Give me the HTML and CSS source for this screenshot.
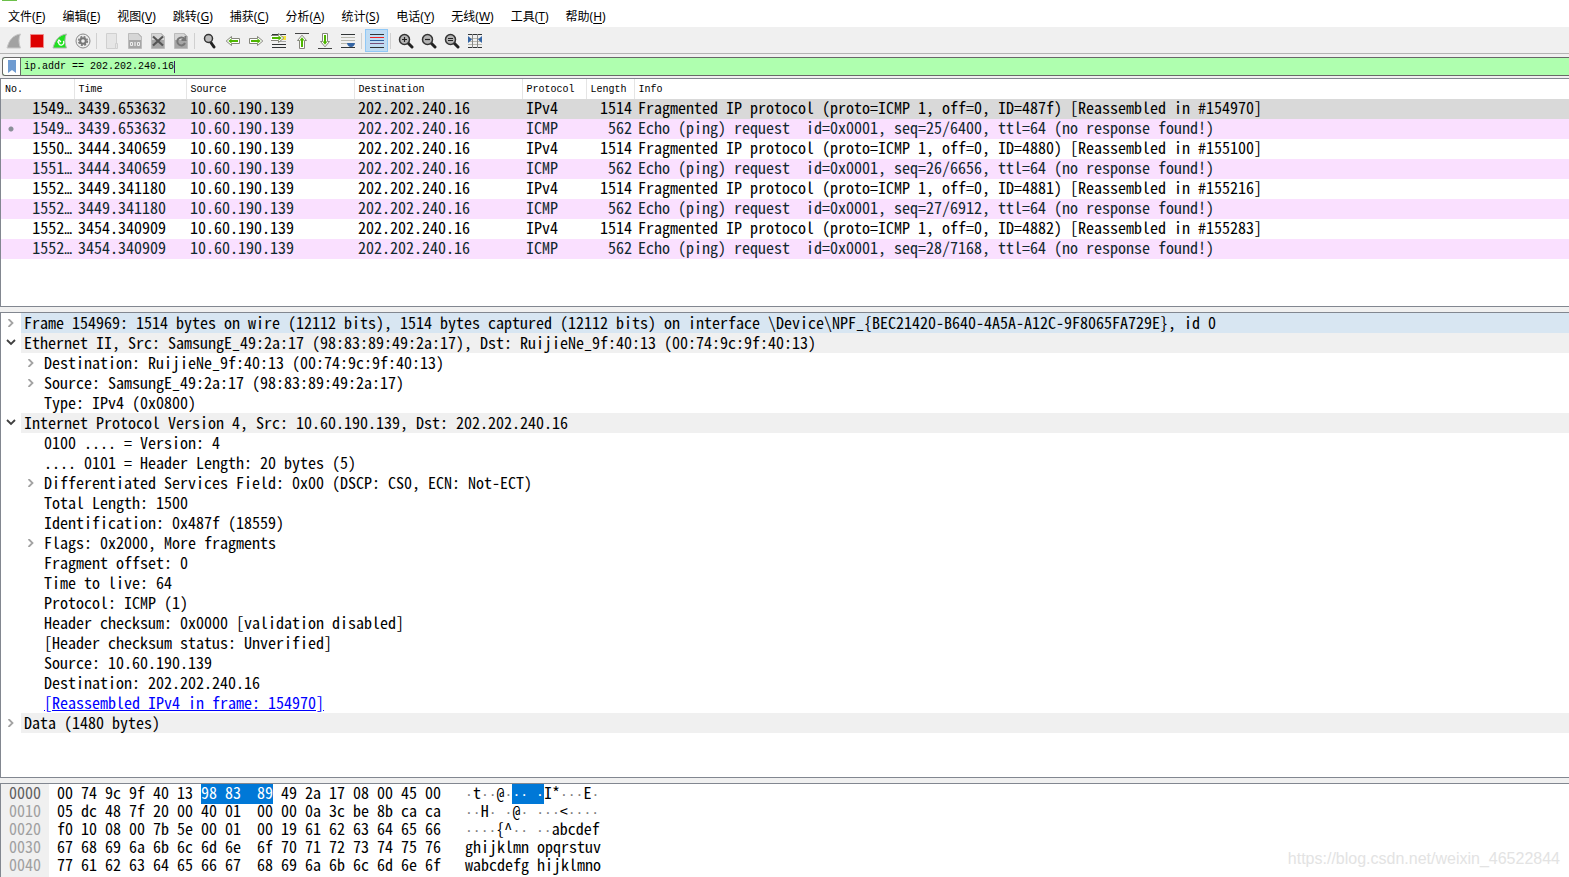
FILE: index.html
```
<!DOCTYPE html>
<html lang="zh-CN">
<head>
<meta charset="utf-8">
<title>Wireshark</title>
<link rel="stylesheet" href="styles.css">
</head>
<body>
<svg class="defs" width="0" height="0" aria-hidden="true">
  <symbol id="doc" viewBox="0 0 16 16"><path d="M1.500 .5h10l3 3v12h-13z" fill="#a6a6a6" stroke="#bcbcbc"/><path d="M2 1h9l3 3v3H2z" fill="#d6d6d6"/></symbol>
  <symbol id="lens" viewBox="0 0 16 16"><path d="M10 10l4 4" stroke="#222" stroke-width="3" stroke-linecap="round"/><circle cx="6.500" cy="6.500" r="5" fill="#b4b4b4" stroke="#333" stroke-width="1.500"/></symbol>
  <symbol id="arrow" viewBox="0 0 16 16"><path d="M1.200 8l5.300-4.500v2h8v5h-8v2z" fill="#fff" stroke="#85857c"/><path d="M3.300 8l3.200-2.500v1.500h6.500v2H6.500v1.500z" fill="#4eb500"/></symbol>
  <symbol id="more" viewBox="0 0 8 8"><path d="M1.500 0L5.500 4 1.500 8" fill="none" stroke="#a3a3a3" stroke-width="1.800"/></symbol>
  <symbol id="less" viewBox="0 0 10 8"><path d="M1 1L5 5 9 1" fill="none" stroke="#404040" stroke-width="1.800"/></symbol>
</svg>
<span class="app-icon"></span>
<nav class="menu">
  <button>文件(<u>F</u>)</button><button>编辑(<u>E</u>)</button><button>视图(<u>V</u>)</button><button>跳转(<u>G</u>)</button><button>捕获(<u>C</u>)</button><button>分析(<u>A</u>)</button><button>统计(<u>S</u>)</button><button>电话(<u>Y</u>)</button><button>无线(<u>W</u>)</button><button>工具(<u>T</u>)</button><button>帮助(<u>H</u>)</button>
</nav>
<div class="toolbar">
  <button aria-label="Start"><svg viewBox="0 0 16 16"><path d="M1 15C3 7 7 2 14.500 1c-2 4-2 9 0 14z" fill="#a2a2a2" stroke="#c8c8c8"/></svg></button>
  <button aria-label="Stop"><svg viewBox="0 0 16 16"><path d="M1.500 1.500h13v13h-13z" fill="#d00" stroke="#e88"/></svg></button>
  <button aria-label="Restart"><svg viewBox="0 0 16 16"><path d="M1 15C3 7 7 2 14.500 1c-2 4-2 9 0 14z" fill="#1fe01f" stroke="#b0b8b0"/><path d="M6.800 8.500a2.600 2.600 0 1 0 4.500-.5M5.500 9.500l1.500-2.500 2 2" fill="none" stroke="#fff" stroke-width="1.300"/></svg></button>
  <button aria-label="Options"><svg viewBox="0 0 16 16"><circle cx="8" cy="8" r="7" fill="#eee" stroke="#8a8a8a"/><circle cx="8" cy="8" r="3.800" fill="#777"/><circle cx="8" cy="8" r="4.300" fill="none" stroke="#777" stroke-width="1.500" stroke-dasharray="2 1.400"/><circle cx="8" cy="8" r="1.800" fill="#eee"/></svg></button>
  <i></i>
  <button aria-label="Open"><svg viewBox="0 0 16 16"><path d="M2.500 .5h10v15h-10z" fill="#e6e6e6" stroke="#d0d0d0"/><path d="M11.500 10.500h2v5h-2z" fill="#e6e6e6" stroke="#d0d0d0"/></svg></button>
  <button aria-label="Save"><svg viewBox="0 0 16 16"><use href="#doc"/><path d="M3.500 9.500h2v3h-2zM10.500 9.500h2v3h-2z" fill="none" stroke="#eee"/><path d="M8 9v4" stroke="#eee" stroke-width="1.200"/></svg></button>
  <button aria-label="Close"><svg viewBox="0 0 16 16"><use href="#doc"/><path d="M3 3.500l10 9M13 3.500l-10 9" stroke="#555" stroke-width="2.200"/></svg></button>
  <button aria-label="Reload"><svg viewBox="0 0 16 16"><use href="#doc"/><path d="M11.500 6A4 4 0 1 0 12 10M12.500 3V7h-4" fill="none" stroke="#777" stroke-width="2"/></svg></button>
  <i></i>
  <button aria-label="Find"><svg viewBox="0 0 16 16"><path d="M8.500 9l3.500 5" stroke="#222" stroke-width="3" stroke-linecap="round"/><circle cx="6.500" cy="5.500" r="4" fill="#bbb" stroke="#333" stroke-width="1.500"/></svg></button>
  <button aria-label="Back"><svg viewBox="0 0 16 16"><use href="#arrow"/></svg></button>
  <button aria-label="Forward"><svg viewBox="0 0 16 16"><use href="#arrow" transform="rotate(180 8 8)"/></svg></button>
  <button aria-label="Go to packet"><svg viewBox="0 0 16 16"><path d="M1 1.500h14M1 11.500h14M1 14.500h14" stroke="#303436"/><path d="M9 3h6v4H9z" fill="#f5e33c"/><path d="M8 8.500h7" stroke="#aaa"/><use href="#arrow" transform="rotate(180 7 7) translate(0 1)"/></svg></button>
  <button aria-label="First packet"><svg viewBox="0 0 16 16"><path d="M1 .5h14" stroke="#444"/><use href="#arrow" transform="translate(0 1) rotate(90 8 8)"/></svg></button>
  <button aria-label="Last packet"><svg viewBox="0 0 16 16"><path d="M1 15.500h14" stroke="#444"/><use href="#arrow" transform="translate(0 -1) rotate(-90 8 8)"/></svg></button>
  <button aria-label="Auto scroll"><svg viewBox="0 0 16 16"><path d="M1 1.500h14M1 14.500h14" stroke="#303436"/><path d="M1 4.500h14M1 7.500h14M1 10.500h7" stroke="#b8b8ae"/><path d="M7 10h8c0 2-2 4-4 4s-4-2-4-4z" fill="#3465a4"/></svg></button>
  <i></i>
  <button class="on" aria-label="Colorize"><svg viewBox="0 0 16 16"><path d="M1 1.500h14M1 14.500h14" stroke="#303436"/><path d="M1 4.500h14" stroke="#e22"/><path d="M1 7.500h14" stroke="#2f62a0"/><path d="M1 10.500h14" stroke="#75507b"/></svg></button>
  <i></i>
  <button aria-label="Zoom in"><svg viewBox="0 0 16 16"><use href="#lens"/><path d="M4 6.500h5M6.500 4v5" stroke="#222" stroke-width="1.200"/></svg></button>
  <button aria-label="Zoom out"><svg viewBox="0 0 16 16"><use href="#lens"/><path d="M4 6.500h5" stroke="#222" stroke-width="1.200"/></svg></button>
  <button aria-label="Normal size"><svg viewBox="0 0 16 16"><use href="#lens"/><path d="M4 5.500h5M4 7.500h5" stroke="#222"/></svg></button>
  <button aria-label="Resize columns"><svg viewBox="0 0 16 16"><path d="M1 1.500h14M1 14.500h14" stroke="#303436"/><path d="M1 5.500h14M1 8.500h14M1 11.500h14" stroke="#b8b8ae"/><path d="M5.500 1v14M10.500 1v14" stroke="#888"/><path d="M1 3l4 3.500-4 3.500zM15 3l-4 3.500 4 3.500z" fill="#3465a4"/></svg></button>
</div>
<div class="filter">
  <button aria-label="Bookmark"><svg viewBox="0 0 8 13"><path d="M0 0h8v13L4 10l-4 3z" fill="#6f9bd1"/></svg></button>
  <input aria-label="Display filter" value="ip.addr == 202.202.240.16" size="25"><span class="caret"></span>
</div>
<main>
<section class="pane list">
<table>
  <colgroup><col class="c-no"><col class="c-time"><col class="c-addr"><col class="c-addr"><col class="c-proto"><col class="c-len"><col></colgroup>
  <thead><tr><th>No.</th><th>Time</th><th>Source</th><th>Destination</th><th>Protocol</th><th>Length</th><th>Info</th></tr></thead>
  <tbody>
  <tr class="sel"><td>1549<span>…</span></td><td>3439.653632</td><td>10.60.190.139</td><td>202.202.240.16</td><td>IPv4</td><td>1514</td><td>Fragmented IP protocol (proto=ICMP 1, off=0, ID=487f) [Reassembled in #154970]</td></tr>
  <tr class="icmp dot"><td>1549<span>…</span></td><td>3439.653632</td><td>10.60.190.139</td><td>202.202.240.16</td><td>ICMP</td><td>562</td><td>Echo (ping) request  id=0x0001, seq=25/6400, ttl=64 (no response found!)</td></tr>
  <tr><td>1550<span>…</span></td><td>3444.340659</td><td>10.60.190.139</td><td>202.202.240.16</td><td>IPv4</td><td>1514</td><td>Fragmented IP protocol (proto=ICMP 1, off=0, ID=4880) [Reassembled in #155100]</td></tr>
  <tr class="icmp"><td>1551<span>…</span></td><td>3444.340659</td><td>10.60.190.139</td><td>202.202.240.16</td><td>ICMP</td><td>562</td><td>Echo (ping) request  id=0x0001, seq=26/6656, ttl=64 (no response found!)</td></tr>
  <tr><td>1552<span>…</span></td><td>3449.341180</td><td>10.60.190.139</td><td>202.202.240.16</td><td>IPv4</td><td>1514</td><td>Fragmented IP protocol (proto=ICMP 1, off=0, ID=4881) [Reassembled in #155216]</td></tr>
  <tr class="icmp"><td>1552<span>…</span></td><td>3449.341180</td><td>10.60.190.139</td><td>202.202.240.16</td><td>ICMP</td><td>562</td><td>Echo (ping) request  id=0x0001, seq=27/6912, ttl=64 (no response found!)</td></tr>
  <tr><td>1552<span>…</span></td><td>3454.340909</td><td>10.60.190.139</td><td>202.202.240.16</td><td>IPv4</td><td>1514</td><td>Fragmented IP protocol (proto=ICMP 1, off=0, ID=4882) [Reassembled in #155283]</td></tr>
  <tr class="icmp"><td>1552<span>…</span></td><td>3454.340909</td><td>10.60.190.139</td><td>202.202.240.16</td><td>ICMP</td><td>562</td><td>Echo (ping) request  id=0x0001, seq=28/7168, ttl=64 (no response found!)</td></tr>
  </tbody>
</table>
</section>
<section class="pane details">
<ul class="tree">
  <li><div class="row top current"><button aria-label="Expand"><svg class="more"><use href="#more"/></svg></button><span>Frame 154969: 1514 bytes on wire (12112 bits), 1514 bytes captured (12112 bits) on interface \Device\NPF_{BEC21420-B640-4A5A-A12C-9F8065FA729E}, id 0</span></div></li>
  <li><div class="row top"><button aria-label="Collapse"><svg class="less"><use href="#less"/></svg></button><span>Ethernet II, Src: SamsungE_49:2a:17 (98:83:89:49:2a:17), Dst: RuijieNe_9f:40:13 (00:74:9c:9f:40:13)</span></div>
    <ul>
      <li class="row"><button aria-label="Expand"><svg class="more"><use href="#more"/></svg></button><span>Destination: RuijieNe_9f:40:13 (00:74:9c:9f:40:13)</span></li>
      <li class="row"><button aria-label="Expand"><svg class="more"><use href="#more"/></svg></button><span>Source: SamsungE_49:2a:17 (98:83:89:49:2a:17)</span></li>
      <li class="row leaf"><span>Type: IPv4 (0x0800)</span></li>
    </ul></li>
  <li><div class="row top"><button aria-label="Collapse"><svg class="less"><use href="#less"/></svg></button><span>Internet Protocol Version 4, Src: 10.60.190.139, Dst: 202.202.240.16</span></div>
    <ul>
      <li class="row leaf"><span>0100 .... = Version: 4</span></li>
      <li class="row leaf"><span>.... 0101 = Header Length: 20 bytes (5)</span></li>
      <li class="row"><button aria-label="Expand"><svg class="more"><use href="#more"/></svg></button><span>Differentiated Services Field: 0x00 (DSCP: CS0, ECN: Not-ECT)</span></li>
      <li class="row leaf"><span>Total Length: 1500</span></li>
      <li class="row leaf"><span>Identification: 0x487f (18559)</span></li>
      <li class="row"><button aria-label="Expand"><svg class="more"><use href="#more"/></svg></button><span>Flags: 0x2000, More fragments</span></li>
      <li class="row leaf"><span>Fragment offset: 0</span></li>
      <li class="row leaf"><span>Time to live: 64</span></li>
      <li class="row leaf"><span>Protocol: ICMP (1)</span></li>
      <li class="row leaf"><span>Header checksum: 0x0000 [validation disabled]</span></li>
      <li class="row leaf"><span>[Header checksum status: Unverified]</span></li>
      <li class="row leaf"><span>Source: 10.60.190.139</span></li>
      <li class="row leaf"><span>Destination: 202.202.240.16</span></li>
      <li class="row leaf"><span><a href="#frame">[Reassembled IPv4 in frame: 154970]</a></span></li>
    </ul></li>
  <li><div class="row top"><button aria-label="Expand"><svg class="more"><use href="#more"/></svg></button><span>Data (1480 bytes)</span></div></li>
</ul>
</section>
<section class="pane bytes">
<pre class="offsets"><b>0000</b>
0010
0020
0030
0040</pre>
<pre class="hex">00 74 9c 9f 40 13 <mark>98 83  89</mark> 49 2a 17 08 00 45 00
05 dc 48 7f 20 00 40 01  00 00 0a 3c be 8b ca ca
f0 10 08 00 7b 5e 00 01  00 19 61 62 63 64 65 66
67 68 69 6a 6b 6c 6d 6e  6f 70 71 72 73 74 75 76
77 61 62 63 64 65 66 67  68 69 6a 6b 6c 6d 6e 6f</pre>
<pre class="ascii"><i>·</i>t<i>··</i>@<i>·</i><mark><i>··</i> <i>·</i></mark>I*<i>···</i>E<i>·</i>
<i>··</i>H<i>·</i> <i>·</i>@<i>·</i> <i>···</i>&lt;<i>····</i>
<i>····</i>{^<i>··</i> <i>··</i>abcdef
ghijklmn opqrstuv
wabcdefg hijklmno</pre>
</section>
</main>
<span class="watermark">https://blog.csdn.net/weixin_46522844</span>
</body>
</html>
```
FILE: styles.css
```
* { box-sizing: border-box; }
body {
  margin: 0;
  height: 100vh;
  display: flex;
  flex-direction: column;
  overflow: hidden;
  background: #f0f0f0;
  color: #000;
  font: 16px/16px "Noto Sans Mono CJK SC", "DejaVu Sans Mono", monospace;
}
button { margin: 0; padding: 0; border: 0; background: none; color: inherit; font: inherit; }
.defs { position: absolute; }
.app-icon { position: absolute; left: 2px; top: 0; width: 15px; height: 1px; background: #6cc04a; }

.menu {
  display: flex;
  gap: 17px;
  height: 28px;
  padding: 7px 8px 0;
  background: #fff;
  border-bottom: 1px solid #f0f0f0;
  font: 12px/20px "Noto Sans", "Noto Sans CJK SC", sans-serif;
}
.menu button { white-space: nowrap; }
.menu u { text-underline-offset: 2px; }

.toolbar {
  display: flex;
  align-items: center;
  height: 26px;
  padding-left: 2px;
  border-bottom: 1px solid #b4b4b4;
}
.toolbar button { display: flex; width: 23px; height: 23px; padding: 4px 0 0 4px; }
.toolbar svg { width: 16px; height: 16px; }
.toolbar i { width: 1px; height: 16px; margin: 0 3px 0 2px; background: #d0d0d0; }
.toolbar .on { background: #c0dcf3; box-shadow: inset 0 0 0 1px #90c8f6; }

.filter {
  display: flex;
  align-items: center;
  height: 19px;
  margin: 3px 0 2px 2px;
  border: 1px solid #686868;
  border-right: 0;
  border-radius: 3px 0 0 3px;
  background: #afffaf;
}
.filter button { display: grid; place-items: center; width: 18px; height: 17px; background: #fff; border-right: 1px solid #686868; border-radius: 3px 0 0 3px; }
.filter svg { width: 8px; height: 13px; }
.filter input {
  width: 153px;
  padding: 0 0 0 3px;
  border: 0;
  outline: 0;
  background: none;
  font: 10px/17px "Liberation Mono", monospace;
}
.caret { width: 1px; height: 12px; background: #402060; }

main { flex: 1; min-height: 0; display: flex; flex-direction: column; gap: 5px; }
.pane { flex-basis: 0; min-height: 0; overflow: hidden; background: #fff; border: 1px solid #828790; border-right: 0; }
.list { flex-grow: 227; }
.details { flex-grow: 464; }
.bytes { flex-grow: 93; border-bottom: 0; }

table { width: 100%; border-collapse: collapse; table-layout: fixed; }
.c-no { width: 73px; }
.c-time { width: 112px; }
.c-addr { width: 168px; }
.c-proto { width: 64px; }
.c-len { width: 48px; }
th, td { height: 20px; padding: 0 0 0 4px; text-align: left; vertical-align: top; font-weight: 400; white-space: pre; }
th { padding-top: 2px; border-right: 1px solid #e5e5e5; font: 10px/18px "Liberation Mono", monospace; }
th:last-child { border-right: 0; }
td:first-child, td:nth-child(6) { text-align: right; padding-right: 2px; }
td span { font: 13px/1px "DejaVu Sans Mono", monospace; }
.sel { background: #d9d9d9; }
.icmp { background: #fae0ff; color: #12272e; }
.dot td:first-child { background: radial-gradient(circle at 10px 10px, #8a8f98 2px, transparent 3px); }

ul { margin: 0; padding: 0; list-style: none; }
.tree ul { padding-left: 20px; }
.row { display: flex; height: 20px; white-space: pre; }
.row button { display: grid; place-items: center; width: 20px; height: 20px; }
.row span { flex: 1; padding: 1px 0 0 3px; }
.leaf { padding-left: 20px; }
.top span { background: #f0f0f0; }
.current span { background: #d8e6f2; }
.more { width: 8px; height: 8px; }
.less { width: 10px; height: 8px; }
a { color: #00f; }

.bytes { display: flex; line-height: 18px; }
pre { margin: -1px 0 0; font: inherit; }
.offsets { width: 48px; padding-left: 8px; background: #f0f0f0; color: #a0a0a0; }
.offsets b { font-weight: 400; color: #606060; }
.hex { padding-left: 8px; }
.ascii { padding-left: 24px; }
.ascii i { color: #808080; font: 13px/1px "DejaVu Sans Mono", monospace; }
mark { background: #0078d7; color: #fff; }
.ascii mark i { color: #fff; }

.watermark {
  position: absolute;
  right: 9px;
  bottom: 8px;
  color: #e3e3e3;
  font: 16px/20px "Liberation Sans", Arial, sans-serif;
}
```
